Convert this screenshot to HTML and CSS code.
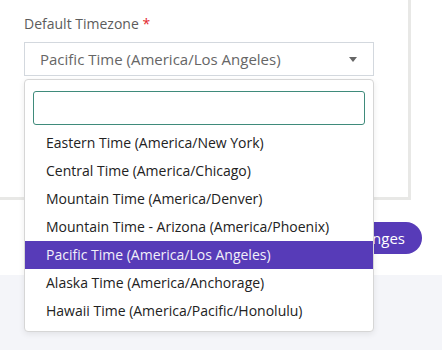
FILE: index.html
```html
<!DOCTYPE html>
<html lang="en">
<head>
  <meta charset="UTF-8" />
  <title>Settings</title>
  <meta name="viewport" content="width=device-width, initial-scale=1" />
  <link rel="stylesheet" href="styles.css">
</head>
<body>
  <div class="content">
    <div class="card">
      <div class="field">
        <label class="label">Default Timezone <span class="req">*</span></label>
        <div class="select">
          <span class="select-value">Pacific Time (America/Los Angeles)</span>
          <span class="arrow"></span>
        </div>

        <!-- open dropdown -->
        <div class="dropdown">
          <input class="search" type="text" />
          <ul class="options">
            <li>Eastern Time (America/New York)</li>
            <li>Central Time (America/Chicago)</li>
            <li>Mountain Time (America/Denver)</li>
            <li>Mountain Time - Arizona (America/Phoenix)</li>
            <li class="active">Pacific Time (America/Los Angeles)</li>
            <li>Alaska Time (America/Anchorage)</li>
            <li>Hawaii Time (America/Pacific/Honolulu)</li>
          </ul>
        </div>
      </div>
    </div>

    <div class="actions">
      <button class="save-btn">Save Changes</button>
    </div>
  </div>
  <div class="footer"></div>
</body>
</html>
```

FILE: styles.css
```css
body {
  margin: 0;
  background: #fff;
  font-family: "Open Sans", Arial, sans-serif;
}

.content {
  display: flow-root;
  background: #fff;
  height: 275px;
}

.footer {
  background: #f4f5f9;
  height: 75px;
}

.card {
  margin: -20px 31px 0 -20px;
  height: 183px;
  border: 3px solid #e8e8e6;
  padding: 31px 0 0 41px;
}

.field {
  position: relative;
  width: 350px;
}

.label {
  display: block;
  font-size: 14px;
  line-height: 20px;
  color: #5c5c5c;
  margin-bottom: 8px;
}

.req {
  color: #e3262b;
}

.select {
  height: 32px;
  border: 1px solid #d3d8de;
  display: flex;
  align-items: center;
  justify-content: space-between;
  padding: 0 16px 0 15px;
}

.select-value {
  font-size: 15px;
  color: #666;
}

.arrow {
  width: 0;
  height: 0;
  border-style: solid;
  border-width: 5px 4px 0 4px;
  border-color: #666 transparent transparent transparent;
}

.dropdown {
  position: absolute;
  top: 65px;
  left: 0;
  width: 348px;
  background: #fff;
  border: 1px solid #d6d6d6;
  border-radius: 4px;
  box-shadow: 0 2px 6px rgba(0, 0, 0, 0.08);
  padding: 11px 0 6px;
  z-index: 5;
}

.search {
  display: block;
  box-sizing: border-box;
  width: 332px;
  height: 34px;
  margin: 0 8px 4px;
  border: 1px solid #3f8b7b;
  border-radius: 3px;
  outline: none;
}

.options {
  list-style: none;
  margin: 0;
  padding: 0;
}

.options li {
  height: 28px;
  line-height: 28px;
  padding-left: 21px;
  font-size: 14px;
  color: #222;
}

.options li.active {
  background: #573bb8;
  color: #f2f0fa;
}

.actions {
  display: flex;
  justify-content: flex-end;
  padding: 22px 20px 0 0;
}

.save-btn {
  height: 32px;
  padding: 0 17px;
  border: none;
  border-radius: 16px;
  background: #573bb8;
  color: #fff;
  font-family: "Open Sans", Arial, sans-serif;
  font-size: 15px;
}
```
